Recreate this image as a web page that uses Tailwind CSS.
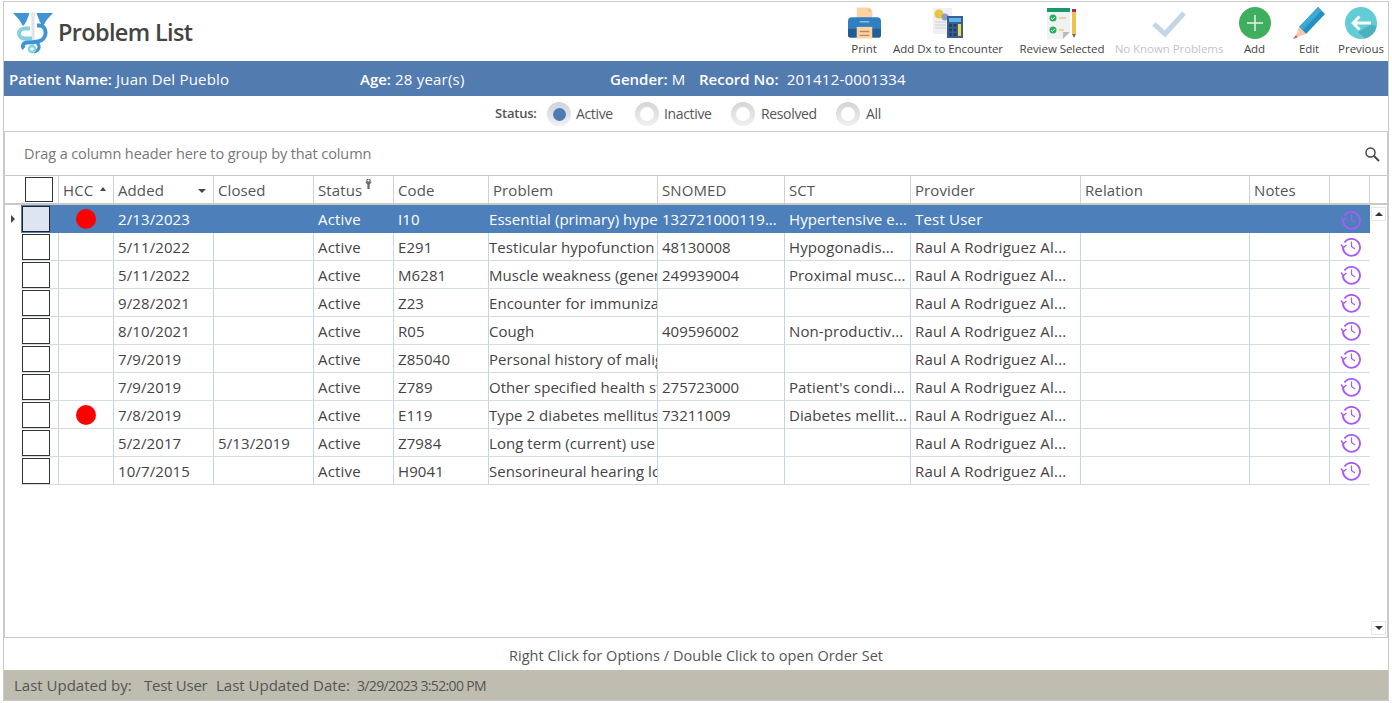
<!DOCTYPE html>
<html lang="en">
<head>
  <meta charset="UTF-8">
  <title>Problem List</title>
  <script src="https://cdn.jsdelivr.net/npm/@tailwindcss/browser@4"></script>
</head>
<body class="bg-white overflow-hidden font-['Open_Sans',sans-serif] text-[#444]">
  <div class="ml-[3px] mt-px w-[1386px] h-[700px] border-x border-t border-b border-[#c9c9c9] flex flex-col">

    <!-- title and toolbar -->
    <div class="h-[59px] flex shrink-0">
      <div class="flex items-center pl-[9px] w-[839px]">
        <svg class="w-[40px] h-[42px] mt-[3px]" viewBox="0 0 40 42">
          <path d="M0 1h16.500l-1.500 4-1.500 4-2 3.500-1.500 1.500-4-6.500z" fill="#3f94d6"/>
          <path d="M40 1H23.500l1.500 4 1.500 4 2 3.500 1.500 1.500 4-6.500z" fill="#3f94d6"/>
          <rect x="18.500" y="1" width="3" height="32" rx="1.500" fill="#dfe4e8"/>
          <circle cx="20" cy="2.500" r="2.500" fill="#e6e9ec"/>
          <path d="M17 16.500h-5c-8 0-8 10 0 10h7" fill="none" stroke="#84d2e0" stroke-width="4"/>
          <path d="M24 13.500h2c9 0 9 14-1 16-4 1-10 1-11 1-4 0-5 4-3 6" fill="none" stroke="#3f94d6" stroke-width="4"/>
          <path d="M24 31c4 3 2 8-3 9" fill="none" stroke="#3f94d6" stroke-width="3"/>
          <circle cx="19" cy="37" r="3" fill="none" stroke="#84d2e0" stroke-width="2.500"/>
        </svg>
        <h1 class="ml-[5px] mt-[2px] text-[23.500px] font-semibold text-[#444] tracking-[-0.65px]">Problem List</h1>
      </div>
      <div class="flex text-[11.500px] tracking-[-0.05px] leading-none">
        <div class="w-[42px] flex flex-col items-center">
          <svg class="w-[33px] h-[32px] mt-[5px]" viewBox="0 0 34 32">
            <path d="M9 0h12l4 4v10H9z" fill="#fdd3a4"/>
            <path d="M21 0l4 4h-4z" fill="#e8b98a"/>
            <path d="M4 10h26a4 4 0 0 1 4 4v14a3 3 0 0 1-3 3H3a3 3 0 0 1-3-3V14a4 4 0 0 1 4-4z" fill="#2f7fc1"/>
            <path d="M0 22h34v6a3 3 0 0 1-3 3H3a3 3 0 0 1-3-3z" fill="#1f5f95"/>
            <rect x="12" y="14" width="10" height="1.500" fill="#8fc0e6"/>
            <path d="M9 20h16v12H9z" fill="#fdd3a4"/>
            <path d="M12 24h10v1.500H12zM12 28h10v1.500H12z" fill="#b88a5c"/>
          </svg>
          <span class="mt-[4px]">Print</span>
        </div>
        <div class="w-[126px] flex flex-col items-center">
          <svg class="w-[30px] h-[32px] mt-[5px]" viewBox="0 0 30 32">
            <rect x="0" y="1" width="19" height="26" fill="#eef0f3"/>
            <circle cx="6" cy="7" r="4.500" fill="#e9c53c"/>
            <circle cx="12" cy="10" r="3.500" fill="#8d9fc2"/>
            <path d="M2 15h11M2 18h11M2 21h11" stroke="#ccd1d8"/>
            <rect x="14" y="9" width="16" height="22" fill="#3b5f91"/>
            <rect x="16" y="11" width="12" height="4" fill="#5ab6e6"/>
            <path d="M16 17h3v3h-3zM20.500 17h3v3h-3zM16 21.500h3v3h-3zM20.500 21.500h3v3h-3zM16 26h3v3h-3zM20.500 26h3v3h-3z" fill="#20416f"/>
            <path d="M25 17h3v12h-3z" fill="#f2dc4e"/>
          </svg>
          <span class="mt-[4px]">Add Dx to Encounter</span>
        </div>
        <div class="w-[102px] flex flex-col items-center">
          <svg class="w-[30px] h-[32px] mt-[5px]" viewBox="0 0 30 32">
            <path d="M0 1h23v24l-7 7H0z" fill="#f0f1f2"/>
            <rect x="0" y="1" width="23" height="4" fill="#149a6d"/>
            <path d="M16 32v-7h7z" fill="#b9bcbf"/>
            <circle cx="6" cy="11" r="3.500" fill="#27ae60"/>
            <circle cx="6" cy="23" r="3.500" fill="#27ae60"/>
            <path d="M4.200 11l1.300 1.300 2.400-2.400M4.200 23l1.300 1.300 2.400-2.400" stroke="#fff" fill="none"/>
            <path d="M12 11h7M12 23h5" stroke="#e6b34a" stroke-width="1.200"/>
            <rect x="25" y="2" width="4" height="3" fill="#b5245e"/>
            <rect x="25" y="5" width="4" height="22" fill="#eec24d"/>
            <path d="M25 27h4l-2 4z" fill="#7b6a44"/>
          </svg>
          <span class="mt-[4px]">Review Selected</span>
        </div>
        <div class="w-[112px] flex flex-col items-center text-[#c4c4c4]">
          <svg class="w-[34px] h-[28px] mt-[8px] mb-[1px]" viewBox="0 0 34 28">
            <path d="M2 14l11 10L32 3" fill="none" stroke="#c5d5e8" stroke-width="5"/>
          </svg>
          <span class="mt-[4px]">No Known Problems</span>
        </div>
        <div class="w-[58px] pl-px flex flex-col items-center">
          <svg class="w-[32px] h-[32px] mt-[5px]" viewBox="0 0 32 32">
            <circle cx="16" cy="16" r="16" fill="#3fae5f"/>
            <path d="M16 8v16M8 16h16" stroke="#e6f5ea" stroke-width="1.500"/>
          </svg>
          <span class="mt-[4px]">Add</span>
        </div>
        <div class="w-[52px] flex flex-col items-center">
          <svg class="w-[32px] h-[32px] mt-[5px]" viewBox="0 0 32 32">
            <path d="M6 20L25 0l7 7-19 20z" fill="#2291bf"/>
            <path d="M25 0l3.500 3.500L9.500 23.500 6 20z" fill="#3fa9d6"/>
            <path d="M6 20l7 7-11 4z" fill="#f6c7b0"/>
            <path d="M3 28l1.500 2.500L0 32z" fill="#d9534f"/>
          </svg>
          <span class="mt-[4px]">Edit</span>
        </div>
        <div class="w-[52px] flex flex-col items-center">
          <svg class="w-[32px] h-[32px] mt-[5px]" viewBox="0 0 32 32">
            <circle cx="16" cy="16" r="16" fill="#62cdd6"/>
            <path d="M13 25l13-7.500 5.700 1.500A16 16 0 0 1 20 31.500z" fill="#4cb0bd"/>
            <path d="M6 16l7.500-7.500 2 2-4 4H26v3H11.500l4 4-2 2z" fill="#fff"/>
          </svg>
          <span class="mt-[4px]">Previous</span>
        </div>
      </div>
    </div>

    <!-- patient bar -->
    <div class="h-[35px] shrink-0 bg-[#527bb0] text-white text-[15px] flex items-center pl-[5px] pt-px tracking-[0.2px] whitespace-nowrap">
      <div class="w-[351px]"><b class="font-semibold tracking-[-0.05px]">Patient Name:</b> Juan Del Pueblo</div>
      <div class="w-[250px]"><b class="font-semibold tracking-normal">Age:</b> 28 year(s)</div>
      <div class="w-[89px]"><b class="font-semibold tracking-normal">Gender:</b> M</div>
      <div><b class="font-semibold tracking-normal">Record No:</b>&nbsp; 201412-0001334</div>
    </div>

    <!-- status filter -->
    <div class="h-[35px] shrink-0 flex items-center pl-[491px] text-[14px] text-[#555] tracking-[-0.35px]">
      <span class="font-semibold text-[13px] tracking-[-0.2px] mt-px w-[52px]">Status:</span>
      <span class="mt-px w-[24px] h-[24px] rounded-full bg-gradient-to-b from-[#cfd3d8] to-[#eef0f2] flex items-center justify-center"><span class="w-[13px] h-[13px] rounded-full bg-[#4d7cb5]"></span></span>
      <span class="ml-[5px] w-[59px]">Active</span>
      <span class="mt-px w-[24px] h-[24px] rounded-full bg-gradient-to-b from-[#d4d4d4] to-[#f0f0f0] flex items-center justify-center"><span class="w-[14px] h-[14px] rounded-full bg-white"></span></span>
      <span class="ml-[5px] w-[67px]">Inactive</span>
      <span class="mt-px w-[24px] h-[24px] rounded-full bg-gradient-to-b from-[#d4d4d4] to-[#f0f0f0] flex items-center justify-center"><span class="w-[14px] h-[14px] rounded-full bg-white"></span></span>
      <span class="ml-[6px] w-[75px]">Resolved</span>
      <span class="mt-px w-[24px] h-[24px] rounded-full bg-gradient-to-b from-[#d4d4d4] to-[#f0f0f0] flex items-center justify-center"><span class="w-[14px] h-[14px] rounded-full bg-white"></span></span>
      <span class="ml-[6px]">All</span>
    </div>

    <!-- grid -->
    <div class="h-[507px] shrink-0 border-y border-x border-[#c9c9c9] flex flex-col">
      <div class="h-[43px] shrink-0 flex items-center justify-between pl-[19px] pr-[7px] pt-px text-[14.500px] text-[#777] tracking-[-0.1px]">
        <span>Drag a column header here to group by that column</span>
        <svg class="w-[16px] h-[16px]" viewBox="0 0 16 16" fill="none" stroke="#444" stroke-width="1.500">
          <circle cx="6.500" cy="6.500" r="4.500"/><path d="M10 10l5 5" stroke-width="2"/>
        </svg>
      </div>
      <div id="head" class="h-[30px] shrink-0 flex border-t border-b-2 border-[#c9c9c9] text-[15px] tracking-[0.1px] text-[#555]"></div>
      <div class="flex-1 flex min-h-0">
        <div id="rows" class="w-[1365px] text-[15px]"></div>
        <div class="flex-1 flex flex-col justify-between items-center pt-[2px] pb-[2px]">
          <div class="w-[15px] h-[14px] border border-[#e6e6e6] flex items-center justify-center"><span class="w-0 h-0 border-x-[4px] border-x-transparent border-b-[4px] border-b-[#333]"></span></div>
          <div class="w-[15px] h-[14px] border border-[#e6e6e6] flex items-center justify-center"><span class="w-0 h-0 border-x-[4px] border-x-transparent border-t-[4px] border-t-[#333]"></span></div>
        </div>
      </div>
    </div>

    <div class="h-[32px] shrink-0 flex items-center justify-center pt-[3px] text-[14.500px] text-[#555] tracking-[0.05px]">Right Click for Options / Double Click to open Order Set</div>
    <div class="flex-1 bg-[#bfbdb0] flex items-center pl-[10px] text-[15px] text-[#555] whitespace-nowrap">
      <span class="w-[130px]">Last Updated by:</span>
      <span class="w-[72px] tracking-[-0.25px]">Test User</span>
      <span class="w-[141px]">Last Updated Date:</span>
      <span class="text-[14px] tracking-[-0.65px]">3/29/2023 3:52:00 PM</span>
    </div>
  </div>

  <script>
    const widths = [38, 55, 100, 100, 80, 95, 169, 127, 126, 170, 169, 80, 40];

    const historyIcon = `<svg class="w-[22px] h-[22px] -mt-px" viewBox="0 0 22 22" fill="none" stroke="#a85cf5" stroke-width="1.900">
      <path d="M4.500 7.500A8.500 8.500 0 1 1 3 12"/><path d="M1 9.500l2.500 3 3-2.500" stroke-width="1.500"/><path d="M11.500 6.500v5l3.500 2.500" stroke-width="1.200"/></svg>`;

    const headers = ['', 'HCC', 'Added', 'Closed', 'Status', 'Code', 'Problem', 'SNOMED', 'SCT', 'Provider', 'Relation', 'Notes', ''];

    const problems = [
      [true, '2/13/2023', '', 'I10', 'Essential (primary) hypertension', '132721000119...', 'Hypertensive e...', 'Test User'],
      [false, '5/11/2022', '', 'E291', 'Testicular hypofunction', '48130008', 'Hypogonadis...', 'Raul A Rodriguez Al...'],
      [false, '5/11/2022', '', 'M6281', 'Muscle weakness (generalized)', '249939004', 'Proximal musc...', 'Raul A Rodriguez Al...'],
      [false, '9/28/2021', '', 'Z23', 'Encounter for immunization', '', '', 'Raul A Rodriguez Al...'],
      [false, '8/10/2021', '', 'R05', 'Cough', '409596002', 'Non-productiv...', 'Raul A Rodriguez Al...'],
      [false, '7/9/2019', '', 'Z85040', 'Personal history of malignant', '', '', 'Raul A Rodriguez Al...'],
      [false, '7/9/2019', '', 'Z789', 'Other specified health status', '275723000', "Patient's condi...", 'Raul A Rodriguez Al...'],
      [true, '7/8/2019', '', 'E119', 'Type 2 diabetes mellitus without', '73211009', 'Diabetes mellit...', 'Raul A Rodriguez Al...'],
      [false, '5/2/2017', '5/13/2019', 'Z7984', 'Long term (current) use of', '', '', 'Raul A Rodriguez Al...'],
      [false, '10/7/2015', '', 'H9041', 'Sensorineural hearing loss', '', '', 'Raul A Rodriguez Al...']
    ];

    const tracks = {
      2: 'tracking-[0.1px]', 3: 'tracking-[0.1px]', 4: 'tracking-[0.2px]', 5: 'tracking-[0.1px]',
      6: 'tracking-[0.05px]', 7: '', 8: 'tracking-[0.1px]', 9: 'tracking-[0.2px]'
    };

    let head = '<div class="w-[16px] shrink-0"></div>';
    headers.forEach((h, i) => {
      let inner = h;
      if (i === 0) inner = '<span class="block w-[28px] h-[25px] border border-[#333] bg-white"></span>';
      if (h === 'HCC') inner = 'HCC <span class="absolute right-[7px] top-[11px] w-0 h-0 border-x-[3.500px] border-x-transparent border-b-[4px] border-b-[#444]"></span>';
      if (h === 'Added') inner = 'Added <span class="absolute right-[7px] top-[13px] w-0 h-0 border-x-[4px] border-x-transparent border-t-[4px] border-t-[#444]"></span>';
      if (h === 'Status') inner = 'Status <svg class="absolute left-[50px] top-[3px] w-[9px] h-[10px]" viewBox="0 0 8 9"><circle cx="4" cy="1.500" r="1.500" fill="none" stroke="#666"/><path d="M1 2.500h6L5 5v4H3V5z" fill="#666"/></svg>';
      const line = i === 0 ? 'pl-[4px]' : 'pl-[4px] pt-px';
      head += `<div class="relative shrink-0 border-r border-[#d0d0d0] flex items-center ${line} whitespace-nowrap" style="width:${widths[i]}px">${inner}</div>`;
    });
    head += '<div class="flex-1"></div>';
    document.getElementById('head').innerHTML = head;

    document.getElementById('rows').innerHTML = problems.map((p, r) => {
      const selected = r === 0;
      const cells = ['', p[0] ? '<span class="block ml-[17px] w-[20px] h-[20px] rounded-full bg-[#ff0000]"></span>' : '', p[1], p[2], 'Active', p[3], p[4], p[5], p[6], p[7], '', '', historyIcon];
      let row = `<div class="w-[16px] shrink-0 flex items-center pl-[6px]">${selected ? '<span class="w-0 h-0 border-y-[4px] border-y-transparent border-l-[4px] border-l-[#444]"></span>' : ''}</div>`;
      row += `<div class="flex-1 flex ${selected ? 'bg-[#4d7fbb] text-white' : 'border-b border-[#d4dde6] text-[#444]'}">`;
      cells.forEach((c, i) => {
        let inner = `<span class="block overflow-hidden whitespace-nowrap w-full pt-px ${tracks[i] || ''}">${c}</span>`;
        if (i === 0) inner = `<span class="block ml-[1px] w-[28px] h-[26px] border ${selected ? 'border-[#222] bg-[#dce5f0]' : 'border-[#333] bg-white'}"></span>`;
        if (i === 1 || i === 12) inner = c;
        let pad = 'pl-[4px]';
        if (i === 0 || i === 1 || i === 6) pad = '';
        if (i === 12) pad = 'pl-[10px]';
        const line = selected || i === 12 ? '' : 'border-r border-[#c6d5e4]';
        row += `<div class="shrink-0 ${line} flex items-center ${pad}" style="width:${widths[i]}px">${inner}</div>`;
      });
      return `<div class="h-[28px] flex">${row}</div></div>`;
    }).join('');
  </script>
</body>
</html>
